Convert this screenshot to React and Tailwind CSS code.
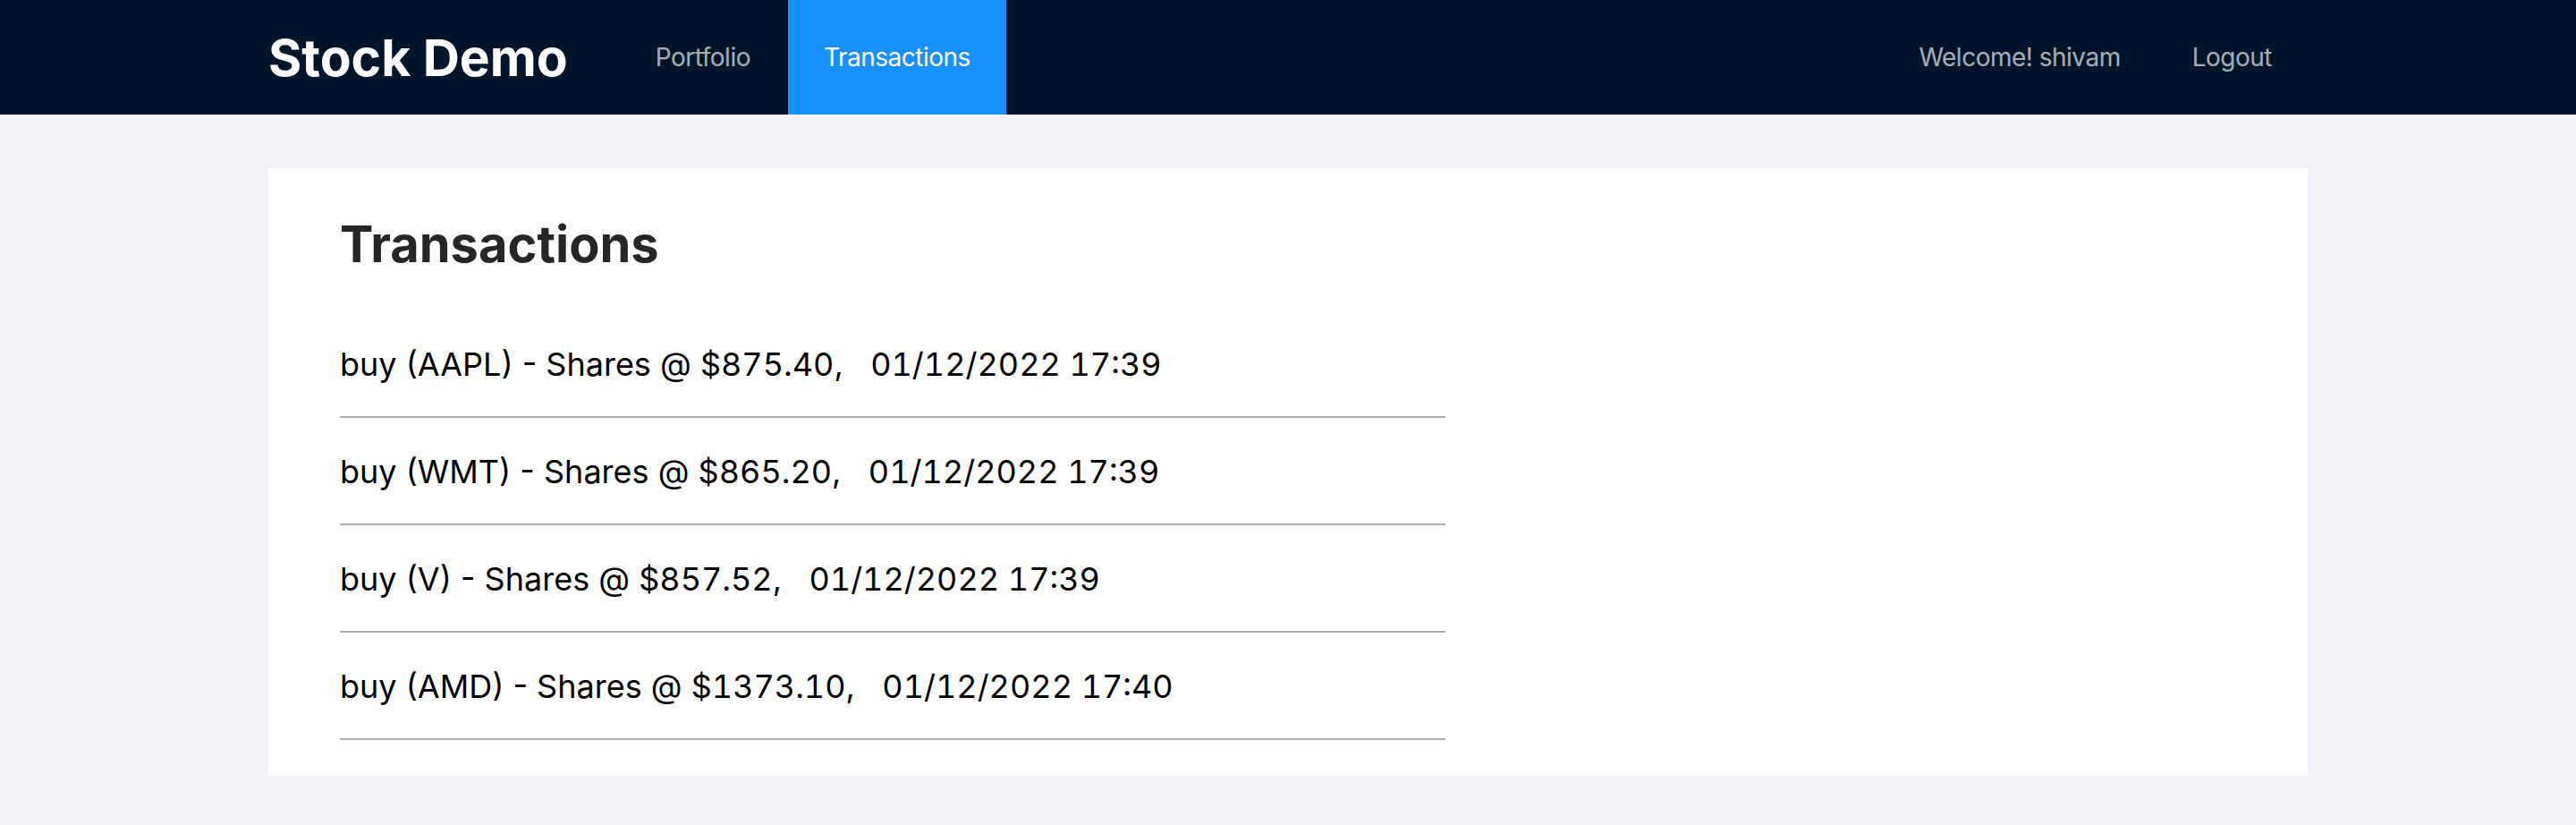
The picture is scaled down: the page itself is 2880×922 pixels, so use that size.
import React from 'react'

const transactions = [
  { type: 'buy', symbol: 'AAPL', price: '875.40', date: '01/12/2022 17:39' },
  { type: 'buy', symbol: 'WMT', price: '865.20', date: '01/12/2022 17:39' },
  { type: 'buy', symbol: 'V', price: '857.52', date: '01/12/2022 17:39' },
  { type: 'buy', symbol: 'AMD', price: '1373.10', date: '01/12/2022 17:40' },
]

function NavItem({ children, active }) {
  return (
    <a
      href="#"
      className={
        'flex items-center h-full px-[40px] text-[28px] tracking-[-0.5px] ' +
        (active ? 'bg-[#1890ff] text-white' : 'text-white/65')
      }
    >
      {children}
    </a>
  )
}

function Header() {
  return (
    <header className="h-[128px] bg-[#001529]">
      <div className="max-w-[2280px] mx-auto h-full flex items-center">
        <h1 className="text-[57px] font-bold text-white leading-none mr-[58px]">Stock Demo</h1>
        <nav className="flex h-full gap-[2px]">
          <NavItem>Portfolio</NavItem>
          <NavItem active>Transactions</NavItem>
        </nav>
        <div className="ml-auto flex h-full">
          <NavItem>Welcome! shivam</NavItem>
          <NavItem>Logout</NavItem>
        </div>
      </div>
    </header>
  )
}

function TransactionRow({ tx }) {
  return (
    <li className="pt-[41px] pb-[39px] border-b-2 border-[#a9a9a9] text-[36px] leading-[38px] text-black">
      {tx.type} ({tx.symbol}) - Shares @ <span className="tabular-nums">${tx.price}</span>,&nbsp;&nbsp;{' '}
      <span className="tabular-nums">{tx.date}</span>
    </li>
  )
}

export default function App() {
  return (
    <div className="min-h-screen bg-[#f0f2f5] font-['Inter','Noto_Sans',sans-serif]">
      <Header />
      <main className="pt-[60px]">
        <div className="max-w-[2280px] mx-auto bg-white pt-[47px] px-[80px] pb-[40px]">
          <h2 className="text-[56px] leading-[76px] font-bold text-black/85 mb-[36px]">Transactions</h2>
          <ul className="w-[1236px]">
            {transactions.map(tx => (
              <TransactionRow key={tx.symbol} tx={tx} />
            ))}
          </ul>
        </div>
      </main>
    </div>
  )
}
